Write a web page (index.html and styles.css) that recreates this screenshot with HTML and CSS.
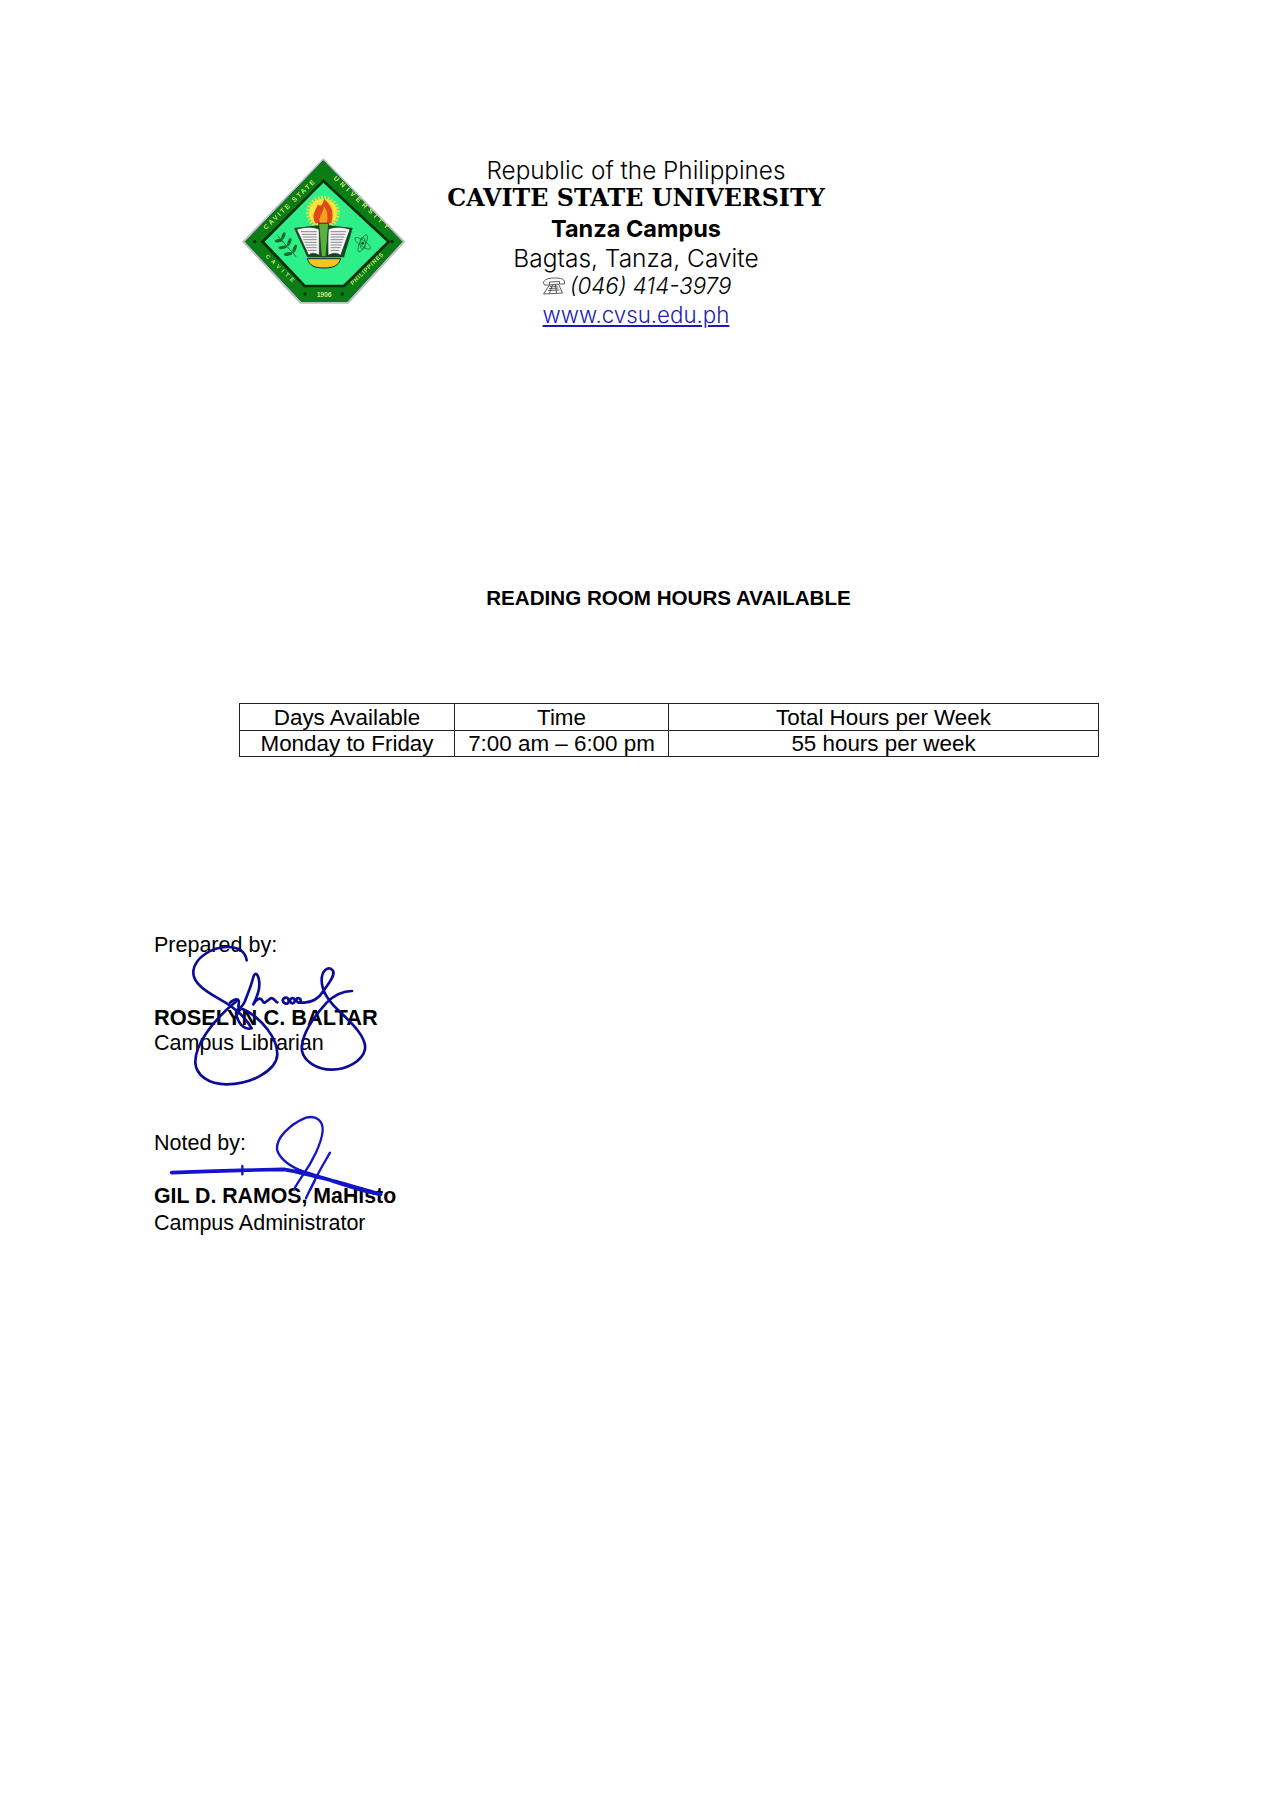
FILE: index.html
```html
<!DOCTYPE html>
<html lang="en">
<head>
<meta charset="utf-8">
<title>Reading Room Hours Available</title>
<link rel="stylesheet" href="styles.css">
</head>
<body>
<div class="page">
  <header class="letterhead">
    <svg class="logo" viewBox="0 0 600 540" aria-hidden="true">
      <defs>
        <path id="arcL" d="M138 270 L300 114"/>
        <path id="arcR" d="M340 116 L510 278"/>
        <path id="arcBL" d="M136 350 L226 436"/>
        <path id="arcBR" d="M398 436 L496 340"/>
      </defs>
      <polygon class="l-rim" points="310,54 556,305 386,491 240,491 66,305"/>
      <polygon class="l-ring" points="310,62 546,305 382,484 244,484 76,305"/>
      <polygon class="l-line" points="310,118 512,305 374,442 252,442 122,305"/>
      <polygon class="l-field" points="310,128 500,305 370,434 256,434 134,305"/>
      <text class="l-ringtext"><textPath href="#arcL" textLength="205">CAVITE STATE</textPath></text>
      <text class="l-ringtext"><textPath href="#arcR" textLength="220">UNIVERSITY</textPath></text>
      <text class="l-ringsmall"><textPath href="#arcBL" textLength="112">CAVITE</textPath></text>
      <text class="l-ringsmall"><textPath href="#arcBR" textLength="130">PHILIPPINES</textPath></text>
      <text class="l-year" x="313" y="470" text-anchor="middle">1906</text>
      <circle class="l-dot" cx="104" cy="305" r="5"/>
      <circle class="l-dot" cx="516" cy="305" r="5"/>
      <circle class="l-dot" cx="255" cy="462" r="5"/>
      <circle class="l-dot" cx="367" cy="462" r="5"/>
      <circle class="l-sun" cx="309" cy="218" r="42"/>
      <circle class="l-sunray" cx="309" cy="218" r="46"/>
      <path class="l-flame" d="M312 176 C334 196 344 214 334 250 L286 250 C272 224 288 212 294 192 C300 204 310 192 312 176Z"/>
      <path class="l-flame2" d="M312 198 C322 214 326 230 320 248 L300 248 C294 230 310 220 312 198Z"/>
      <path class="l-bookback" d="M222 264 L296 256 L326 256 L398 264 L372 352 L262 352Z"/>
      <path class="l-page" d="M230 268 C255 260 280 260 298 268 L298 346 C285 338 272 338 266 346Z"/>
      <path class="l-page" d="M324 268 C342 260 366 260 390 268 L362 346 C352 338 338 338 324 346Z"/>
      <path class="l-lines" d="M243 275 L290 275 M245 283 L290 283 M248 291 L290 291 M250 299 L290 299 M253 307 L290 307 M256 315 L290 315 M259 323 L290 323 M262 331 L290 331 M332 275 L378 275 M332 283 L376 283 M332 291 L373 291 M332 299 L370 299 M332 307 L367 307 M332 315 L365 315 M332 323 L362 323 M332 331 L358 331"/>
      <path class="l-torch" d="M296 250 L326 250 L318 350 L304 350Z"/>
      <path class="l-bowl" d="M262 356 L362 356 C356 378 338 384 312 384 C285 384 268 378 262 356Z"/>
      <g class="l-plant">
        <path class="l-stem" d="M228 350 L172 286"/>
        <ellipse cx="176" cy="302" rx="12" ry="5" transform="rotate(-10 176 302)"/>
        <ellipse cx="190" cy="288" rx="12" ry="5" transform="rotate(-70 190 288)"/>
        <ellipse cx="188" cy="322" rx="13" ry="5" transform="rotate(-10 188 322)"/>
        <ellipse cx="208" cy="306" rx="13" ry="5" transform="rotate(-70 208 306)"/>
        <ellipse cx="204" cy="342" rx="13" ry="5" transform="rotate(-10 204 342)"/>
        <ellipse cx="224" cy="326" rx="13" ry="5" transform="rotate(-70 224 326)"/>
      </g>
      <g class="l-atom">
        <ellipse cx="428" cy="310" rx="28" ry="9" transform="rotate(35 428 310)"/>
        <ellipse cx="428" cy="310" rx="28" ry="9" transform="rotate(-65 428 310)"/>
        <ellipse cx="428" cy="310" rx="18" ry="8" transform="rotate(90 428 310)"/>
      </g>
      <circle class="l-dot" cx="428" cy="310" r="4"/>
    </svg>
    <div class="letterhead-text">
      <div class="lh-republic">Republic of the Philippines</div>
      <div class="lh-univ">CAVITE STATE UNIVERSITY</div>
      <div class="lh-campus">Tanza Campus</div>
      <div class="lh-address">Bagtas, Tanza, Cavite</div>
      <div class="lh-phone">
        <svg class="phone-icon" viewBox="0 0 24 18" aria-hidden="true">
          <path d="M2 6 C2 2 8 1 14 1 C19 1 23 2 23 5 L23 7 L18 7 L18 4.5 L8 5 L8 8 L3 8Z"/>
          <path d="M8 8 L17 7 L21 16 L2 17Z"/>
          <path d="M8.5 9.500 L16 9 M7.500 11.500 L17 11 M6.500 13.500 L18 13 M11 8 L8 16 M14 8 L15 16"/>
        </svg>
        <em>(046) 414-3979</em>
      </div>
      <a class="lh-link" href="#">www.cvsu.edu.ph</a>
    </div>
  </header>

  <main class="schedule">
    <h1 class="schedule-title">READING ROOM HOURS AVAILABLE</h1>
    <table class="hours">
      <colgroup><col class="c1"><col class="c2"><col class="c3"></colgroup>
      <tr class="row-a"><td>Days Available</td><td>Time</td><td>Total Hours per Week</td></tr>
      <tr class="row-b"><td>Monday to Friday</td><td>7:00 am – 6:00 pm</td><td>55 hours per week</td></tr>
    </table>
  </main>

  <section class="signatories">
    <div class="sign-block prepared">
      <p class="sign-label">Prepared by:</p>
      <p class="sign-name">ROSELYN C. BALTAR</p>
      <p class="sign-role">Campus Librarian</p>
      <svg class="sig sig-a" viewBox="0 0 810 540" aria-hidden="true">
        <path d="M320 118 C316 92 296 78 262 78 C215 78 165 110 160 150 C157 185 195 210 235 232 C275 254 315 285 335 322 C315 328 298 312 290 285 C283 262 300 258 320 270 C365 295 412 350 412 400 C410 445 340 490 260 490 C205 490 168 462 166 425 C164 375 215 300 290 240"/>
        <path d="M270 245 C285 232 300 230 296 250 C292 268 305 262 315 240 C325 215 335 190 340 168 C346 150 356 160 358 185 C360 210 345 240 340 250 C350 232 362 228 368 240 C372 252 380 240 392 232 C402 228 404 242 412 244 M428 238 C432 226 446 228 446 240 C446 252 430 250 428 238 M450 238 C454 228 466 230 464 242 C460 250 450 248 450 238 M468 236 C472 228 484 230 482 242 C478 248 470 244 468 236 M482 244 C510 248 535 235 552 208 C568 184 588 160 578 148 C565 134 545 148 545 178 C545 210 565 240 595 268 C640 310 680 350 675 385 C668 420 620 446 575 446 C530 446 492 420 486 390 C482 350 510 300 560 245 C580 225 605 210 636 210"/>
      </svg>
    </div>
    <div class="sign-block noted">
      <p class="sign-label">Noted by:</p>
      <p class="sign-name">GIL D. RAMOS, MaHisto</p>
      <p class="sign-role">Campus Administrator</p>
      <svg class="sig sig-b" viewBox="0 0 810 420" aria-hidden="true">
        <path class="thick" d="M95 215 L200 211 L300 208 L430 205 C480 212 540 230 600 245 C640 256 680 268 722 280 C670 272 610 250 560 234 C530 226 500 215 470 208"/>
        <path d="M307 195 L307 220"/>
        <path d="M490 212 C450 196 418 172 411 145 C408 110 450 70 498 50 C530 42 550 60 548 90 C544 130 515 185 490 220 C480 235 470 250 462 265"/>
        <path d="M570 155 C550 190 525 230 498 292 M525 238 L510 268"/>
      </svg>
    </div>
  </section>
</div>
</body>
</html>
```

FILE: styles.css
```css
* { box-sizing: border-box; }
html, body { margin: 0; padding: 0; background: #fff; }
.page { width: 1272px; height: 1800px; background: #fff; color: #000; font-family: "Liberation Sans", Arial, sans-serif; overflow: hidden; }

.letterhead { display: flex; align-items: flex-start; padding: 156px 0 0 220px; height: 326px; }
.logo { width: 200px; height: 180px; flex: none; margin-top: -16px; filter: blur(.35px); }
.letterhead-text { width: 432px; display: flex; flex-direction: column; align-items: center; font-family: Inter, "Open Sans", sans-serif; text-align: center; }
.lh-republic { font-size: 24.3px; line-height: 28px; font-weight: 300; }
.lh-univ { font-family: "DejaVu Serif", serif; font-weight: 700; font-size: 23.8px; line-height: 28px; }
.lh-campus { font-size: 23.5px; line-height: 33px; font-weight: 700; }
.lh-address { font-size: 24.5px; line-height: 26px; font-weight: 300; }
.lh-phone { display: flex; align-items: center; gap: 4px; font-size: 22.3px; line-height: 30px; font-weight: 300; }
.phone-icon { width: 25px; height: 18px; fill: #fff; stroke: #333; stroke-width: .8; }
.lh-link { color: #1c1cb4; font-size: 22.3px; line-height: 27px; font-weight: 300; text-decoration: underline; }

.schedule { margin-left: 239px; width: 859px; padding-top: 260px; }
.schedule-title { margin: 0 0 93px; font-size: 20.6px; line-height: 24px; font-weight: 700; text-align: center; }
.hours { width: 859px; border-collapse: collapse; table-layout: fixed; font-size: 22.4px; }
.hours td { border: 1px solid #222; padding: 0; line-height: 24px; text-align: center; }
.row-a td { height: 27px; padding-top: 1px; }
.row-b td { height: 26px; }
.c1 { width: 215px; }
.c2 { width: 214px; }
.c3 { width: 430px; }

.signatories { margin-left: 154px; padding-top: 176px; font-size: 21.5px; }
.sign-block { position: relative; width: 400px; }
.sign-block p { margin: 0; }
.sign-label { line-height: 24px; }
.sign-name { font-weight: 700; line-height: 24px; }
.sign-role { line-height: 26px; }
.prepared .sign-label { margin-bottom: 49px; }
.prepared .sign-name { font-size: 21.8px; }
.prepared { margin-bottom: 75px; }
.noted .sign-label { margin-bottom: 29px; }
.noted .sign-name { font-size: 21.3px; margin-bottom: 2px; }
.sig { position: absolute; overflow: visible; fill: none; stroke-linecap: round; stroke-linejoin: round; }
.sig-a { left: -14px; top: -12px; width: 270px; height: 180px; stroke: #0b0b96; stroke-width: 8; }
.sig-b { left: -14px; top: -30px; width: 270px; height: 140px; stroke: #1414c8; stroke-width: 7; }
.sig-b .thick { stroke-width: 11; }

.l-rim { fill: #bdbdbd; }
.l-ring { fill: #0a7d14; stroke: #063; stroke-width: 3; }
.l-line { fill: #03300a; }
.l-field { fill: #2ff088; }
.l-ringtext { font: 700 20px "Liberation Sans", sans-serif; fill: #c9e86a; }
.l-ringsmall { font: 700 17px "Liberation Sans", sans-serif; fill: #c9e86a; }
.l-year { font: 700 20px "Liberation Sans", sans-serif; fill: #d8e88a; }
.l-dot { fill: #062f0a; }
.l-sun { fill: #ffe23a; }
.l-sunray { fill: none; stroke: #f6e23a; stroke-width: 9; stroke-dasharray: 5 5; }
.l-flame { fill: #dd4a18; }
.l-flame2 { fill: #f9a11d; }
.l-bookback { fill: #0b4a1c; }
.l-page { fill: #f3f3f3; stroke: #333; stroke-width: 2; }
.l-lines { fill: none; stroke: #8a8a8a; stroke-width: 3; }
.l-torch { fill: #58b040; stroke: #1c4b18; stroke-width: 3; }
.l-bowl { fill: #f7c51d; stroke: #123; stroke-width: 3; }
.l-plant ellipse { fill: #186a30; }
.l-stem { fill: none; stroke: #186a30; stroke-width: 3; }
.l-atom { fill: none; stroke: #15602e; stroke-width: 2; }
```
